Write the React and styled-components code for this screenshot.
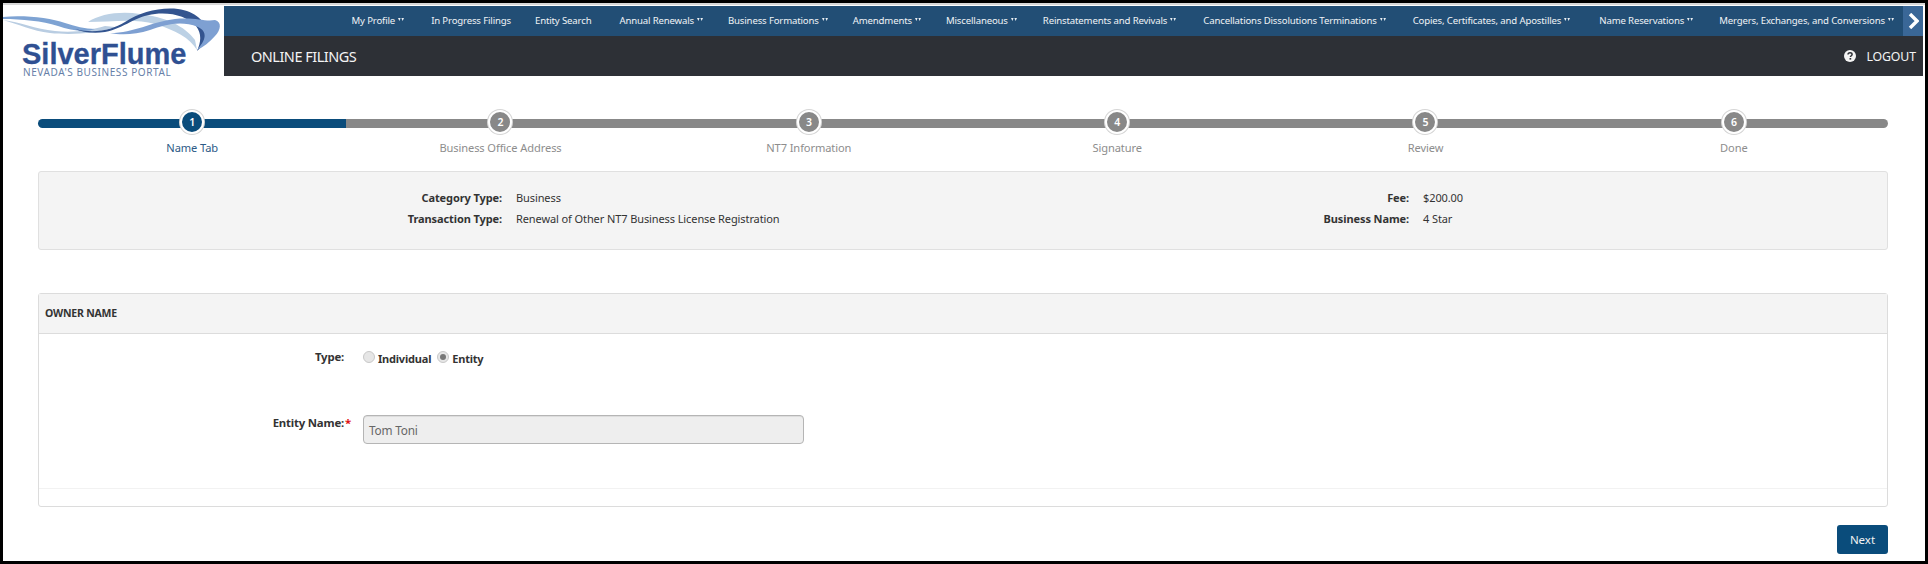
import React from "react";
import styled, { createGlobalStyle } from "styled-components";

const Global = createGlobalStyle`
  html, body { margin: 0; padding: 0; background: #000; }
  * { box-sizing: border-box; }
`;
const UI = `"Noto Sans", "Open Sans", sans-serif`;

const Frame = styled.div`
  width: 1928px; height: 564px; background: #000;
  padding: 3px; overflow: hidden;
`;
const Page = styled.div`
  width: 1922px; height: 558px; background: #fff; border-top: 2px solid #d8d8d8;
  font-family: ${UI}; color: #333; display: flex; flex-direction: column;
`;
const Header = styled.header`
  display: flex; height: 70px; margin: 1px 2px 0 0;
`;
const LogoBox = styled.div`
  width: 221px; position: relative; flex: none; padding: 35px 0 0 19px; background: #fff;
`;
const LogoName = styled.div`
  font: bold 29px/27px "Liberation Sans", Arial, sans-serif; color: #2f5092;
  -webkit-text-stroke: 0.3px #2f5092;
`;
const LogoTag = styled.div`
  font: 10px/8px "Noto Sans", sans-serif; color: #6680a8; letter-spacing: 0.58px; margin: 0 0 0 1px; white-space: nowrap;
`;
const Swoosh = styled.svg`
  position: absolute; left: 0; top: 0; width: 221px; height: 50px;
`;
const HeaderRight = styled.div`
  flex: 1; min-width: 0; display: flex; flex-direction: column;
`;
const TopNav = styled.nav`
  height: 30px; background: #224e75; display: flex; align-items: center; justify-content: flex-end;
`;
const NavItem = styled.a`
  font-size: 9.6px; color: #f0f3f6; white-space: nowrap; margin: -2px 0 0 ${p => p.$gap}px;
  display: inline-flex; align-items: center; gap: 3px; letter-spacing: -0.15px;
`;
const Caret = styled.svg`
  width: 6px; height: 4px; fill: #e8edf2;
`;
const NavArrow = styled.div`
  width: 20px; height: 30px; margin-left: 9px; background: #3a6797; display: flex; align-items: center; justify-content: center;
`;
const TitleBar = styled.div`
  height: 40px; background: #2d3036; display: flex; align-items: center; justify-content: space-between;
  padding: 0 7px 0 27px; color: #f4f4f4;
`;
const Title = styled.div`
  font-size: 14.5px; letter-spacing: -0.5px;
`;
const Logout = styled.div`
  display: flex; align-items: center; gap: 10px; font-size: 12.3px; letter-spacing: -0.1px;
`;
const Content = styled.main`
  padding: 34px 37px 0 35px; flex: 1; display: flex; flex-direction: column;
`;
const Stepper = styled.div`
  position: relative; display: grid; grid-template-columns: repeat(6, 1fr); height: 52px;
`;
const Track = styled.div`
  position: absolute; left: 0; right: 0; top: 9px; height: 9px; border-radius: 5px;
  background: linear-gradient(to right, #0a4c7b 0, #0a4c7b 308px, #888 308px);
`;
const Step = styled.div`
  position: relative; display: flex; flex-direction: column; align-items: center;
  font-size: 11.1px; letter-spacing: -0.1px; color: ${p => (p.$active ? "#2c5a86" : "#8d8d8d")};
`;
const Dot = styled.div`
  width: 24px; height: 24px; border-radius: 50%; border: 2px solid #fff;
  box-shadow: 0 0 0 1px #d5d5d5;
  background: ${p => (p.$active ? "#0a4c7b" : "#888")}; color: #fff;
  display: flex; align-items: center; justify-content: center; font-size: 10.5px; font-weight: 600;
`;
const StepLabel = styled.div`
  margin-top: 7px; line-height: 14px; white-space: nowrap;
`;
const Summary = styled.section`
  height: 79px; margin-top: 9px; background: #f4f4f4; border: 1px solid #e0e0e0; border-radius: 3px;
  display: grid; grid-template-columns: 1fr 1fr; padding: 15px 0 0;
`;
const SummaryCol = styled.dl`
  margin: 0; display: grid; grid-template-columns: ${p => p.$label}px 1fr; grid-auto-rows: 21px; column-gap: 14px;
  font-size: 11px; letter-spacing: -0.1px; color: #333;
`;
const Term = styled.dt`
  font-weight: 700; text-align: right; line-height: 21px;
`;
const Desc = styled.dd`
  margin: 0; line-height: 21px; white-space: nowrap;
`;
const Panel = styled.section`
  margin-top: 43px; height: 214px; border: 1px solid #dcdcdc; border-radius: 3px; display: flex; flex-direction: column;
`;
const PanelHead = styled.div`
  height: 40px; background: #f4f4f4; border-bottom: 1px solid #dcdcdc; padding: 0 6px 2px;
  display: flex; align-items: center; font-size: 10.5px; font-weight: 700; color: #333; letter-spacing: -0.2px;
`;
const PanelBody = styled.div`
  flex: 1; padding-top: 15px; border-bottom: 1px solid #f2f2f2;
`;
const PanelFoot = styled.div`
  height: 17px;
`;
const Row = styled.div`
  display: grid; grid-template-columns: 305px 1fr; column-gap: 19px; margin-bottom: ${p => p.$mb}px; height: ${p => p.$h}px;
`;
const RowLabel = styled.label`
  text-align: right; font-size: 11.4px; font-weight: 700; line-height: 16px; letter-spacing: -0.2px;
`;
const Req = styled.span`
  position: absolute; color: #e01010; margin-left: 1px;
`;
const Radios = styled.div`
  display: flex; align-items: center; height: 18px; font-size: 11px; font-weight: 700; letter-spacing: -0.2px;
`;
const RadioDot = styled.span`
  width: 12px; height: 12px; border-radius: 50%; background: #e6e6e6; border: 1px solid #c8c8c8; margin: -2px 3px 0 ${p => p.$ml}px;
  display: inline-flex; align-items: center; justify-content: center;
  &::after { content: ""; display: ${p => (p.$on ? "block" : "none")}; width: 6px; height: 6px; border-radius: 50%; background: #777; }
`;
const Field = styled.div`
  width: 441px; height: 29px; background: #eee; border: 1px solid #b5b5b5; border-radius: 4px;
  padding: 0 5px; display: flex; align-items: center; font-size: 11.8px; color: #666; letter-spacing: -0.2px; box-shadow: inset 0 1px 0 #ddd;
`;
const Actions = styled.div`
  display: flex; justify-content: flex-end; margin-top: 18px;
`;
const Next = styled.button`
  width: 51px; height: 29px; background: #0a4c7b; border: 0; border-radius: 3px; color: #f2f2f2; font: 11.5px ${UI};
`;

const nav = [
  ["My Profile", 0, 1], ["In Progress Filings", 27, 0], ["Entity Search", 24, 0], ["Annual Renewals", 28, 1],
  ["Business Formations", 25, 1], ["Amendments", 25, 1], ["Miscellaneous", 25, 1], ["Reinstatements and Revivals", 26, 1],
  ["Cancellations Dissolutions Terminations", 27, 1], ["Copies, Certificates, and Apostilles", 27, 1],
  ["Name Reservations", 29, 1], ["Mergers, Exchanges, and Conversions", 26, 1],
];
const steps = ["Name Tab", "Business Office Address", "NT7 Information", "Signature", "Review", "Done"];

export default function App() {
  return (
    <Frame>
      <Global />
      <Page>
        <Header>
          <LogoBox>
            <Swoosh viewBox="3 6 221 50">
              <path d="M3 20 C20 22 35 29 55 31 C75 33 90 30 105 26 L115 27 C95 34 70 35 50 33 C32 31 18 24 3 20Z" fill="#b9cde2" />
              <path d="M3 17 C25 15 50 18 65 23 C75 26 85 29 95 29 C85 33 70 30 58 26 C42 21 22 19 3 19Z" fill="#7ea3d3" />
              <path d="M88 22 C100 14 120 11 140 14 C165 17 185 26 195 40 L197 50 C190 38 175 30 155 24 C135 18 110 22 88 22Z" fill="#bcd1e5" />
              <path d="M75 29 C95 34 112 30 125 22 C140 12 160 7 178 9 C195 11 206 22 208 32 C208 40 203 46 197 51 C201 42 202 34 196 26 C188 17 172 12 155 14 C135 16 125 28 105 32 C93 34 82 32 75 29Z" fill="#33548f" />
              <path d="M110 33 C135 33 150 22 175 19 C195 17 205 22 215 20 C222 22 221 30 215 36 C210 42 203 47 197 50 C206 40 208 32 198 27 C180 20 165 25 150 30 C135 35 120 35 110 33Z" fill="#7ea0d2" />
            </Swoosh>
            <LogoName>SilverFlume</LogoName>
            <LogoTag>NEVADA'S BUSINESS PORTAL</LogoTag>
          </LogoBox>
          <HeaderRight>
            <TopNav>
              {nav.map(([t, g, c]) => (
                <NavItem key={t} $gap={g}>
                  {t}
                  {c ? (
                    <Caret viewBox="0 0 6 4"><path d="M0 0h2.6L1.4 3zM3.4 0H6L4.6 3z" /></Caret>
                  ) : null}
                </NavItem>
              ))}
              <NavArrow>
                <svg width="11" height="16" viewBox="0 0 11 16"><path d="M2 1l7 7-7 7" fill="none" stroke="#fff" strokeWidth="3.4" /></svg>
              </NavArrow>
            </TopNav>
            <TitleBar>
              <Title>ONLINE FILINGS</Title>
              <Logout>
                <svg width="12" height="12" viewBox="0 0 12 12">
                  <circle cx="6" cy="6" r="6" fill="#f4f4f4" />
                  <path d="M4 4.6C4 3.4 5 2.7 6.1 2.7C7.3 2.7 8.1 3.4 8.1 4.4C8.1 5.7 6.4 5.8 6.4 7" fill="none" stroke="#2d3036" strokeWidth="1.5" />
                  <rect x="5.5" y="8" width="1.7" height="1.6" fill="#2d3036" />
                </svg>
                LOGOUT
              </Logout>
            </TitleBar>
          </HeaderRight>
        </Header>
        <Content>
          <Stepper>
            <Track />
            {steps.map((s, i) => (
              <Step key={s} $active={i === 0}>
                <Dot $active={i === 0}>{i + 1}</Dot>
                <StepLabel>{s}</StepLabel>
              </Step>
            ))}
          </Stepper>
          <Summary>
            <SummaryCol $label={463}>
              <Term>Category Type:</Term><Desc>Business</Desc>
              <Term>Transaction Type:</Term><Desc>Renewal of Other NT7 Business License Registration</Desc>
            </SummaryCol>
            <SummaryCol $label={446}>
              <Term>Fee:</Term><Desc>$200.00</Desc>
              <Term>Business Name:</Term><Desc>4 Star</Desc>
            </SummaryCol>
          </Summary>
          <Panel>
            <PanelHead>OWNER NAME</PanelHead>
            <PanelBody>
              <Row $h={20} $mb={46}>
                <RowLabel>Type:</RowLabel>
                <Radios>
                  <RadioDot $ml={0} />Individual
                  <RadioDot $ml={6} $on />Entity
                </Radios>
              </Row>
              <Row $h={29} $mb={0}>
                <RowLabel>Entity Name:<Req>*</Req></RowLabel>
                <Field>Tom Toni</Field>
              </Row>
            </PanelBody>
            <PanelFoot />
          </Panel>
          <Actions><Next>Next</Next></Actions>
        </Content>
      </Page>
    </Frame>
  );
}
